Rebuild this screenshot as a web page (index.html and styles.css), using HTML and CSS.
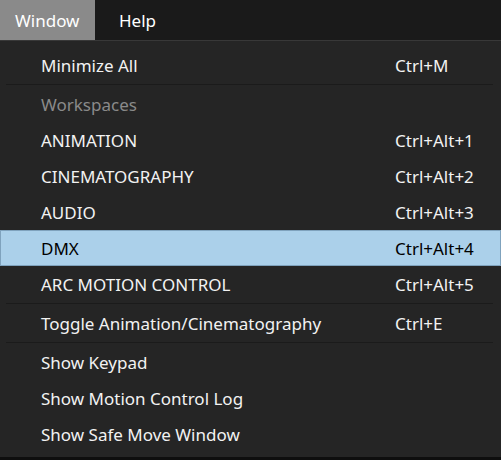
FILE: index.html
```html
<!DOCTYPE html>
<html>
<head>
<meta charset="utf-8">
<link rel="stylesheet" href="styles.css">
</head>
<body>
<div class="menubar">
  <div class="top-item active">Window</div>
  <div class="top-item">Help</div>
</div>
<div class="menu">
  <div class="row"><span class="label">Minimize All</span><span class="key">Ctrl+M</span></div>
  <div class="sep"></div>
  <div class="row disabled"><span class="label">Workspaces</span></div>
  <div class="row"><span class="label">ANIMATION</span><span class="key">Ctrl+Alt+1</span></div>
  <div class="row"><span class="label">CINEMATOGRAPHY</span><span class="key">Ctrl+Alt+2</span></div>
  <div class="row"><span class="label">AUDIO</span><span class="key">Ctrl+Alt+3</span></div>
  <div class="row hover"><span class="label">DMX</span><span class="key">Ctrl+Alt+4</span></div>
  <div class="row"><span class="label">ARC MOTION CONTROL</span><span class="key">Ctrl+Alt+5</span></div>
  <div class="sep"></div>
  <div class="row"><span class="label">Toggle Animation/Cinematography</span><span class="key">Ctrl+E</span></div>
  <div class="sep"></div>
  <div class="row"><span class="label">Show Keypad</span></div>
  <div class="row"><span class="label">Show Motion Control Log</span></div>
  <div class="row"><span class="label">Show Safe Move Window</span></div>
</div>
</body>
</html>
```
FILE: styles.css
```css
html, body {
  margin: 0;
  padding: 0;
  background: #000;
  width: 501px;
  height: 460px;
  overflow: hidden;
  font-family: "Noto Sans", "Open Sans", sans-serif;
  font-size: 17px;
  color: #f2f2f2;
}
.menubar {
  display: flex;
  height: 40px;
  background: #1a1a1a;
}
.top-item {
  display: flex;
  align-items: center;
  padding: 0 15px;
  height: 40px;
  box-sizing: border-box;
  width: 95px;
  color: #ffffff;
}
.top-item + .top-item {
  width: auto;
  padding-left: 24px;
}
.top-item.active {
  background: #8a8a8a;
}
.menu {
  background: #252525;
  border-top: 1px solid #383838;
  border-bottom: 3px solid #0e0e0e;
  padding: 6px 0 5px 0;
}
.row {
  display: flex;
  align-items: center;
  height: 36px;
  box-sizing: border-box;
  padding-left: 41px;
}
.label {
  width: 354px;
  white-space: nowrap;
}
.key {
  white-space: nowrap;
}
.row.disabled {
  color: #8a8a8a;
}
.row.hover {
  background: #abd0ea;
  border: 1px solid #7fa2bd;
  padding-left: 40px;
  color: #000;
}
.sep {
  height: 1px;
  margin: 1px 8px 1px 6px;
  background: #1b1b1b;
}
```
